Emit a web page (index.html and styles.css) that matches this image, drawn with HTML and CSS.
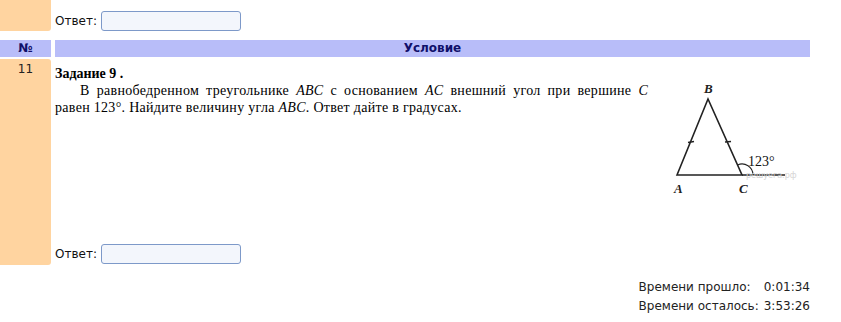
FILE: index.html
```html
<!DOCTYPE html>
<html lang="ru">
<head>
    <meta charset="utf-8">
    <title>Тест</title>
    <link rel="stylesheet" href="styles.css">
</head>
<body>
    <div class="tasks">
        <div class="row row-top">
            <div class="num"></div>
            <div class="answer">Ответ: <input class="answer-input" type="text"></div>
        </div>

        <div class="row row-head">
            <div class="head">№</div>
            <div class="head">Условие</div>
        </div>

        <div class="row row-task">
            <div class="num">11</div>
            <div class="task">
                <div class="task-body">
                    <svg class="task-pic" width="140" height="122" viewBox="0 0 140 122">
                        <g stroke="#222" stroke-width="1.6" fill="none">
                            <path d="M15 97 L46 21 L80 97 Z"/>
                            <path d="M80 97 L123 97"/>
                            <path d="M26 64.5 L32 63.5"/>
                            <path d="M63 64 L69 63.5"/>
                            <path d="M75.6 86.9 A11 11 0 0 1 91 97" stroke-width="1.1"/>
                        </g>
                        <text class="wm" x="84" y="100">решуега.рф</text>
                        <text class="lbl" x="42" y="15">B</text>
                        <text class="lbl" x="12" y="115">A</text>
                        <text class="lbl" x="77" y="115">C</text>
                        <text class="deg" x="86" y="88">123°</text>
                    </svg>
                    <b>Задание 9 .</b>
                    <p>В равнобедренном треугольнике <i>ABC</i> с основанием <i>AC</i> внешний угол при вершине <i>C</i> равен 123°. Найдите величину угла <i>ABC</i>. Ответ дайте в градусах.</p>
                </div>
                <div class="answer">Ответ: <input class="answer-input" type="text"></div>
            </div>
        </div>
    </div>

    <div class="timer">
        <span>Времени прошло:</span><span>0:01:34</span>
        <span>Времени осталось:</span><span>3:53:26</span>
    </div>
</body>
</html>
```

FILE: styles.css
```css
body{
    margin: 0;
    background-color: white;
    font-family: "DejaVu Sans", Verdana, sans-serif;
    font-size: 12px;
    color: #111;
}

.tasks{
    width: 810px;
}

.row{
    display: grid;
    grid-template-columns: 51px 1fr;
    column-gap: 4px;
}

.num{
    background-color: #ffd4a0;
    border-radius: 0 0 3px 0;
    text-align: center;
    padding-top: 3px;
    color: #222;
}

.row-top{
    height: 31px;
}

.row-top .answer{
    padding-top: 10px;
}

.answer{
    display: flex;
    align-items: center;
    gap: 4px;
}

.answer-input{
    width: 140px;
    height: 20px;
    box-sizing: border-box;
    margin: 0;
    border: 1px solid #7d99c9;
    border-radius: 3px;
    background-color: #f3f6fc;
}

.row-head{
    margin-top: 9px;
    height: 17px;
}

.head{
    background-color: #b8bdf9;
    color: #10106a;
    font-weight: bold;
    text-align: center;
    line-height: 17px;
}

.row-task{
    margin-top: 2px;
    height: 206px;
}

.row-task .num{
    border-radius: 0 3px 3px 0;
}

.task{
    display: flex;
    flex-direction: column;
    justify-content: space-between;
    padding-top: 6px;
    padding-bottom: 1px;
}

.task-body{
    font-family: "Liberation Serif", "Times New Roman", serif;
    font-size: 14px;
    line-height: 17px;
    color: #000;
}

.task-body p{
    margin: 0;
    width: 593px;
    text-align: justify;
    text-indent: 25px;
    letter-spacing: 0.3px;
}

.task-pic{
    float: right;
    margin-top: 13px;
    margin-right: 8px;
}

.lbl{
    font-family: "Liberation Serif", serif;
    font-style: italic;
    font-weight: bold;
    font-size: 13px;
    fill: #222;
}

.deg{
    font-family: "Liberation Serif", serif;
    font-size: 14px;
    fill: #111;
}

.wm{
    font-family: "DejaVu Sans", sans-serif;
    font-size: 8px;
    fill: #d4d4d4;
}

.timer{
    width: 810px;
    margin-top: 14px;
    display: grid;
    grid-template-columns: auto auto;
    justify-content: end;
    column-gap: 5px;
    row-gap: 2px;
    line-height: 17px;
    color: #222;
}
```
